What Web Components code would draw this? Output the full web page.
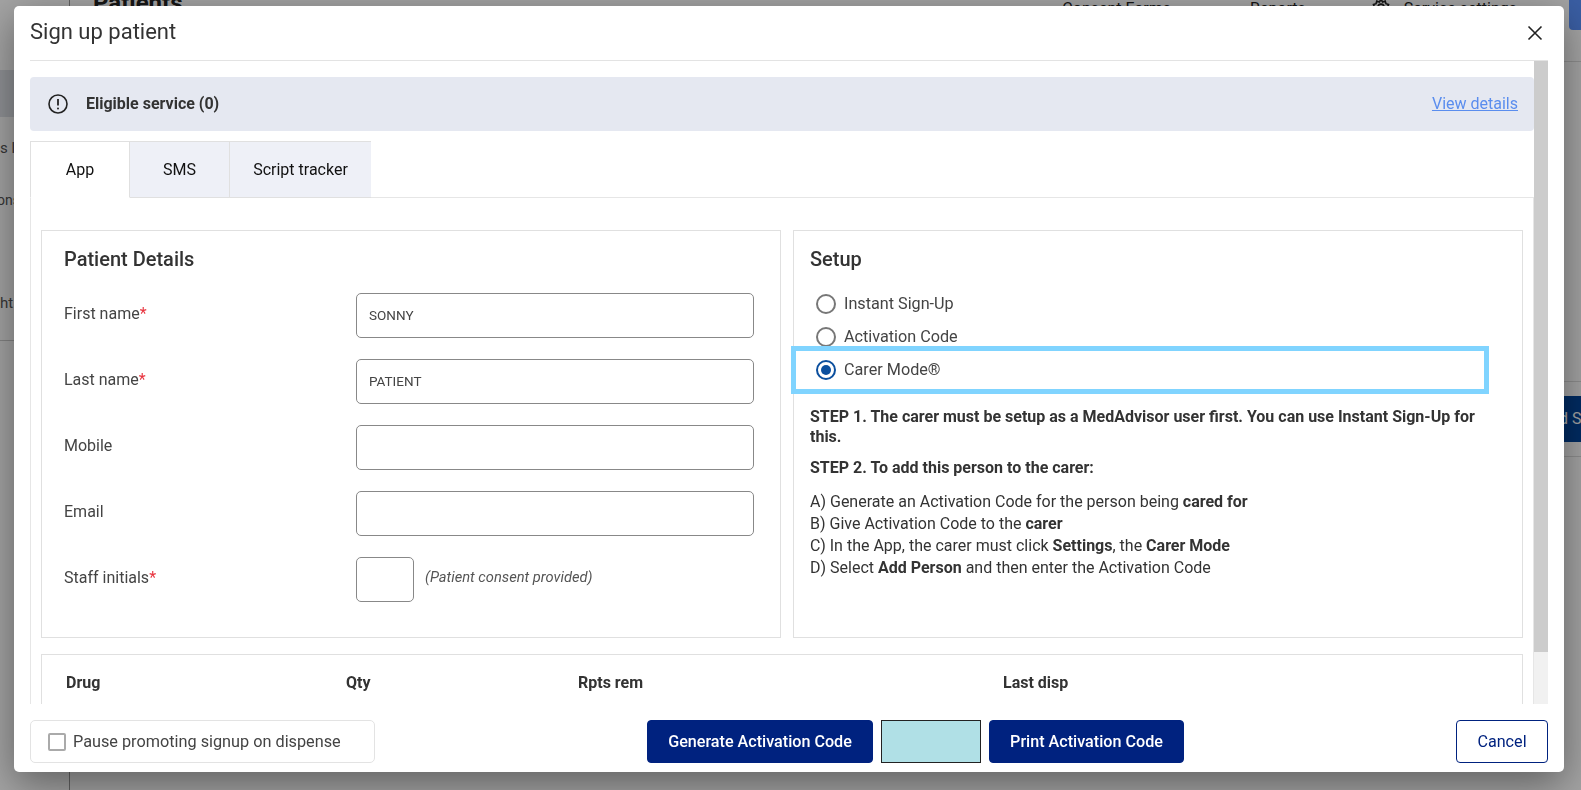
<!DOCTYPE html>
<html>
<head>
<meta charset="utf-8">
<title>Sign up patient</title>
<style>
  html, body { margin: 0; height: 100%; overflow: hidden; }
  body { font-family: Roboto, "Liberation Sans", sans-serif; color: #333; background: #fff; }
</style>
</head>
<body>
<patients-page></patients-page>
<signup-modal>
  <alert-bar slot="alert"></alert-bar>
  <tab-strip slot="tabs"></tab-strip>
  <patient-details slot="left"></patient-details>
  <setup-card slot="right"></setup-card>
  <drug-table slot="table"></drug-table>
  <pause-toggle slot="pause"></pause-toggle>
  <action-btn slot="actions" style="width:226px">Generate Activation Code</action-btn>
  <div slot="actions" style="width:100px;height:43px;box-sizing:border-box;background:#b0e0e6;border:1px solid #222"></div>
  <action-btn slot="actions" style="width:195px">Print Activation Code</action-btn>
  <action-btn slot="cancel" variant="outline" style="width:92px">Cancel</action-btn>
</signup-modal>

<script>
// page behind the dialog, only its edges are visible
class PatientsPage extends HTMLElement {
  connectedCallback() {
    this.attachShadow({ mode: 'open' }).innerHTML = `
      <style>
        :host { display: flex; height: 790px; overflow: hidden; background: #fff; color: #222; font-size: 16px; }
        .side { width: 69px; flex: none; border-right: 1px solid #999; }
        .side .sel { height: 47px; margin-top: 70px; background: #dfe2e8; }
        .side div.item { white-space: nowrap; line-height: 20px; color: #555; font-size: 15px; }
        .side hr { border: 0; border-top: 1px solid #ccc; margin: 27px 0 0; }
        .main { flex: 1; min-width: 0; }
        .top { display: flex; align-items: flex-start; height: 62px; border-bottom: 1px solid #ddd; box-sizing: border-box; }
        h1 { margin: -11px 0 0 23px; font-size: 24px; font-weight: 700; line-height: 28px; }
        .links { margin-left: auto; display: flex; line-height: 18px; }
        .links span { white-space: nowrap; }
        .links svg { display: block; margin: -3px 13px 0 0; }
        .blue { width: 12px; height: 30px; margin-left: 52px; background: #5b93ff; border-bottom-left-radius: 4px; flex: none; }
        .row { margin-top: 319px; border-top: 1px solid #ddd; padding-top: 14px; display: flex; justify-content: flex-end; }
        .go { width: 22px; height: 46px; background: #00449a; color: #fff; line-height: 46px; overflow: hidden; white-space: nowrap; }
        .line { border-top: 1px solid #ddd; margin-top: 14px; }
      </style>
      <div class="side">
        <div class="sel"></div>
        <div class="item" style="margin-top:21px">s l</div>
        <div class="item" style="margin-top:32px;margin-left:-3px;font-size:14px">ons</div>
        <div class="item" style="margin-top:83px">ht</div>
        <hr>
      </div>
      <div class="main">
        <div class="top">
          <h1>Patients</h1>
          <div class="links">
            <span style="margin-right:79px">Consent Forms</span>
            <span style="margin-right:65px">Reports</span>
            <svg width="20" height="20" viewBox="0 0 24 24" fill="none" stroke="#222" stroke-width="2"><path d="M12 3l2 3 3-1 1 3 3 1-1 3 2 2-2 2 1 3-3 1-1 3-3-1-2 2-2-2-3 1-1-3-3-1 1-3-2-2 2-2-1-3 3-1 1-3 3 1z"/><circle cx="12" cy="12" r="3.5"/></svg>
            <span>Service settings</span>
            <div class="blue"></div>
          </div>
        </div>
        <div class="row"><div class="go">d S</div></div>
        <div class="line"></div>
      </div>`;
  }
}
customElements.define('patients-page', PatientsPage);

class SignupModal extends HTMLElement {
  connectedCallback() {
    this.attachShadow({ mode: 'open' }).innerHTML = `
      <style>
        :host { position: fixed; inset: 0; display: block; padding: 6px 17px 18px 14px; box-sizing: border-box; background: rgba(0,0,0,.36); }
        .dialog { height: 100%; display: flex; flex-direction: column; box-sizing: border-box; padding: 0 16px; background: #fff; border-radius: 5px; box-shadow: 0 12px 40px rgba(0,0,0,.42); }
        header { height: 55px; flex: none; display: flex; align-items: center; justify-content: space-between; border-bottom: 1px solid #e3e3e3; box-sizing: border-box; }
        h2 { margin: 0; font-size: 22px; font-weight: 400; color: #333; padding-bottom: 3px; }
        .x { display: block; margin-right: 5px; }
        .body { flex: 1; min-height: 0; display: flex; }
        .scroll { flex: 1; min-width: 0; overflow: hidden; }
        .bar { width: 14px; flex: none; background: #f1f1f1; }
        .thumb { height: 591px; background: #ccc; }
        .content { box-sizing: border-box; padding-top: 16px; }
        .pane { border: 1px solid #e6e6e6; border-top: 0; padding: 32px 10px 0; }
        .cols { display: grid; grid-template-columns: 740px 730px; gap: 12px; }
        ::slotted([slot=table]) { margin-top: 16px; }
        footer { height: 68px; flex: none; padding-top: 16px; box-sizing: border-box; display: flex; justify-content: space-between; align-items: flex-start; }
        .actions { display: flex; gap: 8px; }
      </style>
      <div class="dialog">
        <header>
          <h2>Sign up patient</h2>
          <svg class="x" width="16" height="16" viewBox="0 0 16 16" stroke="#222" stroke-width="1.6"><path d="M1.5 1.5l13 13M14.5 1.5l-13 13"/></svg>
        </header>
        <div class="body">
          <div class="scroll">
            <div class="content">
              <slot name="alert"></slot>
              <slot name="tabs"></slot>
              <div class="pane">
                <div class="cols"><slot name="left"></slot><slot name="right"></slot></div>
                <slot name="table"></slot>
              </div>
            </div>
          </div>
          <div class="bar"><div class="thumb"></div></div>
        </div>
        <footer>
          <slot name="pause"></slot>
          <div class="actions"><slot name="actions"></slot></div>
          <slot name="cancel"></slot>
        </footer>
      </div>`;
  }
}
customElements.define('signup-modal', SignupModal);

class AlertBar extends HTMLElement {
  connectedCallback() {
    this.attachShadow({ mode: 'open' }).innerHTML = `
      <style>
        :host { display: flex; align-items: center; height: 54px; box-sizing: border-box; padding: 0 16px 2px 18px; background: #e5e8f1; border-radius: 4px; font-size: 16px; }
        svg { display: block; margin: 2px 18px 0 0; }
        b { font-weight: 700; color: #333; }
        a { margin-left: auto; color: #5a8dee; text-decoration: underline; }
      </style>
      <svg width="20" height="20" viewBox="0 0 20 20" fill="none" stroke="#222" stroke-width="1.6"><circle cx="10" cy="10" r="9"/><path d="M10 5v6.5" stroke-width="1.8"/><circle cx="10" cy="14.4" r="1" fill="#222" stroke="none"/></svg>
      <b>Eligible service (0)</b>
      <a href="javascript:void(0)">View details</a>`;
  }
}
customElements.define('alert-bar', AlertBar);

class TabStrip extends HTMLElement {
  connectedCallback() {
    this.attachShadow({ mode: 'open' }).innerHTML = `
      <style>
        :host { display: flex; height: 57px; margin-top: 10px; box-sizing: border-box; border-bottom: 1px solid #e6e6e6; font-size: 16px; color: #111; }
        div { display: flex; align-items: center; justify-content: center; box-sizing: border-box; height: 57px; background: #eef0f7; border: 1px solid #e0e0e0; border-left: 0; }
        .on { width: 100px; background: #fff; border-left: 1px solid #e0e0e0; border-bottom-color: #fff; }
        .tab { width: 100px; }
        .wide { width: 141px; border-right: 0; }
      </style>
      <div class="on">App</div><div class="tab">SMS</div><div class="tab wide">Script tracker</div>`;
  }
}
customElements.define('tab-strip', TabStrip);

class FormField extends HTMLElement {
  connectedCallback() {
    const req = this.hasAttribute('required') ? '<i>*</i>' : '';
    const value = this.getAttribute('value') || '';
    const w = this.getAttribute('width') || '398';
    this.attachShadow({ mode: 'open' }).innerHTML = `
      <style>
        :host { display: flex; height: 45px; margin-bottom: 21px; font-size: 16px; color: #444; }
        label { width: 292px; flex: none; padding-top: 12px; line-height: 18px; }
        i { color: #e8343f; font-style: normal; }
        .box { height: 45px; box-sizing: border-box; border: 1px solid #888; border-radius: 5px; padding: 0 12px 2px; display: flex; align-items: center; font-size: 13.5px; color: #444; flex: none; }
        ::slotted(*) { margin: -6px 0 0 11px; align-self: center; }
      </style>
      <label>${this.getAttribute('label')}${req}</label>
      <div class="box" style="width:${w}px">${value}</div>
      <slot></slot>`;
  }
}
customElements.define('form-field', FormField);

class PatientDetails extends HTMLElement {
  connectedCallback() {
    this.attachShadow({ mode: 'open' }).innerHTML = `
      <style>
        :host { display: block; height: 408px; box-sizing: border-box; border: 1px solid #e0e0e0; padding: 16px 22px 0; }
        h3 { margin: 0 0 22px; font-size: 20px; font-weight: 500; line-height: 24px; color: #333; }
        em { font-size: 14.7px; color: #555; }
      </style>
      <h3>Patient Details</h3>
      <form-field label="First name" value="SONNY" required></form-field>
      <form-field label="Last name" value="PATIENT" required></form-field>
      <form-field label="Mobile"></form-field>
      <form-field label="Email"></form-field>
      <form-field label="Staff initials" width="58" required><em>(Patient consent provided)</em></form-field>`;
  }
}
customElements.define('patient-details', PatientDetails);

class RadioOption extends HTMLElement {
  connectedCallback() {
    const checked = this.hasAttribute('checked');
    this.attachShadow({ mode: 'open' }).innerHTML = `
      <style>
        :host { display: flex; align-items: center; height: 33px; padding-left: 6px; font-size: 16.2px; color: #444; }
        .r { width: 20px; height: 20px; box-sizing: border-box; border: 2px solid ${checked ? '#0b4f9e' : '#777'}; border-radius: 50%; margin-right: 8px; display: flex; align-items: center; justify-content: center; flex: none; }
        .r b { width: 10px; height: 10px; border-radius: 50%; background: #0b4f9e; }
      </style>
      <span class="r">${checked ? '<b></b>' : ''}</span><slot></slot>`;
  }
}
customElements.define('radio-option', RadioOption);

class SetupCard extends HTMLElement {
  connectedCallback() {
    this.attachShadow({ mode: 'open' }).innerHTML = `
      <style>
        :host { display: block; position: relative; height: 408px; box-sizing: border-box; border: 1px solid #e0e0e0; padding: 16px 16px 0; font-size: 16px; color: #333; }
        h3 { margin: 0 0 16px; font-size: 20px; font-weight: 500; line-height: 24px; color: #333; }
        .hl { position: absolute; left: -3px; top: 115px; width: 698px; height: 48px; box-sizing: border-box; border: 5px solid #80d4ff; pointer-events: none; }
        p { margin: 0; font-weight: 700; line-height: 20px; font-size: 16px; }
        .s1 { margin-top: 21px; padding-right: 10px; }
        .s2 { margin-top: 11px; }
        ul { list-style: none; margin: 13px 0 0; padding: 0; line-height: 22px; }
        ul b { font-weight: 700; }
      </style>
      <h3>Setup</h3>
      <radio-option>Instant Sign-Up</radio-option>
      <radio-option>Activation Code</radio-option>
      <radio-option checked>Carer Mode®</radio-option>
      <div class="hl"></div>
      <p class="s1">STEP 1. The carer must be setup as a MedAdvisor user first. You can use Instant Sign-Up for this.</p>
      <p class="s2">STEP 2. To add this person to the carer:</p>
      <ul>
        <li>A) Generate an Activation Code for the person being <b>cared for</b></li>
        <li>B) Give Activation Code to the <b>carer</b></li>
        <li>C) In the App, the carer must click <b>Settings</b>, the <b>Carer Mode</b></li>
        <li>D) Select <b>Add Person</b> and then enter the Activation Code</li>
      </ul>`;
  }
}
customElements.define('setup-card', SetupCard);

class DrugTable extends HTMLElement {
  connectedCallback() {
    this.attachShadow({ mode: 'open' }).innerHTML = `
      <style>
        :host { display: block; height: 120px; box-sizing: border-box; border: 1px solid #e0e0e0; font-size: 16px; font-weight: 700; color: #333; }
        .head { display: grid; grid-template-columns: 280px 232px 425px 1fr; padding: 19px 24px 0; line-height: 18px; }
      </style>
      <div class="head"><span>Drug</span><span>Qty</span><span>Rpts rem</span><span>Last disp</span></div>`;
  }
}
customElements.define('drug-table', DrugTable);

class PauseToggle extends HTMLElement {
  connectedCallback() {
    this.attachShadow({ mode: 'open' }).innerHTML = `
      <style>
        :host { display: flex; align-items: center; width: 345px; height: 43px; box-sizing: border-box; padding-left: 17px; border: 1px solid #e3e3e3; border-radius: 5px; font-size: 16.25px; color: #444; }
        span { width: 18px; height: 18px; box-sizing: border-box; border: 2px solid #aaa; border-radius: 2px; margin-right: 7px; flex: none; }
      </style>
      <span></span>Pause promoting signup on dispense`;
  }
}
customElements.define('pause-toggle', PauseToggle);

class ActionBtn extends HTMLElement {
  connectedCallback() {
    const outline = this.getAttribute('variant') === 'outline';
    this.attachShadow({ mode: 'open' }).innerHTML = `
      <style>
        :host { display: flex; align-items: center; justify-content: center; height: 43px; box-sizing: border-box; border-radius: 4px; border: 1px solid #00227f; font-size: 16.15px; font-weight: ${outline ? 400 : 500}; color: ${outline ? '#00227f' : '#fff'}; background: ${outline ? '#fff' : '#00227f'}; }
      </style>
      <slot></slot>`;
  }
}
customElements.define('action-btn', ActionBtn);
</script>
</body>
</html>
